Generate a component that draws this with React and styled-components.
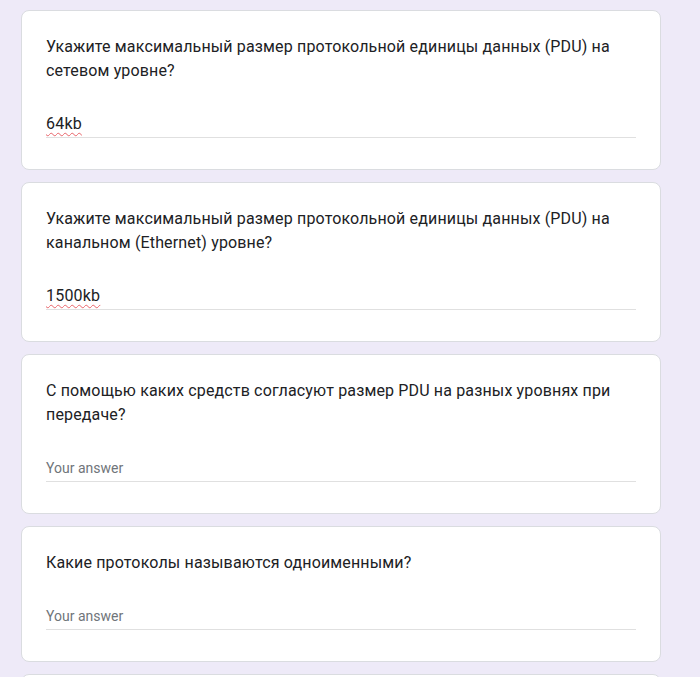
import React from 'react';
import styled, { createGlobalStyle } from 'styled-components';

const GlobalStyle = createGlobalStyle`
    html, body {
        margin: 0;
        padding: 0;
        background: #eeeaf8;
    }
    body {
        font-family: Roboto, "Liberation Sans", Arial, sans-serif;
    }
`;

const Page = styled.div`
    display: flex;
    flex-direction: column;
    gap: 12px;
    padding: 10px 0 0 21px;
    height: 677px;
    overflow: hidden;
    box-sizing: border-box;
`;

const Card = styled.div`
    width: 640px;
    box-sizing: border-box;
    flex-shrink: 0;
    background: #fff;
    border: 1px solid #dadce0;
    border-radius: 8px;
    padding: 24px;
`;

const Question = styled.div`
    font-size: 16px;
    line-height: 24px;
    color: #202124;
    letter-spacing: 0.15px;
`;

const Field = styled.div`
    margin-top: 24px;
    margin-bottom: 7px;
    padding: 5px 0 1px;
    height: 24px;
    border-bottom: 1px solid #e0e0e0;
    font-size: 16px;
    line-height: 24px;
`;

const Value = styled.span`
    color: #202124;
    letter-spacing: 0.2px;
    text-decoration: underline wavy #e8646a;
    text-decoration-thickness: 1px;
    text-underline-offset: 3px;
`;

const Placeholder = styled.span`
    font-size: 14px;
    color: #70757a;
`;

const items = [
    {
        q: 'Укажите максимальный размер протокольной единицы данных (PDU) на сетевом уровне?',
        a: '64kb',
    },
    {
        q: 'Укажите максимальный размер протокольной единицы данных (PDU) на канальном (Ethernet) уровне?',
        a: '1500kb',
    },
    {
        q: 'С помощью каких средств согласуют размер PDU на разных уровнях при передаче?',
        a: '',
    },
    {
        q: 'Какие протоколы называются одноименными?',
        a: '',
    },
    {
        q: 'Что такое инкапсуляция?',
        a: '',
    },
];

export default function App() {
    return (
        <>
            <GlobalStyle />
            <Page>
                {items.map((item, i) => (
                    <Card key={i}>
                        <Question>{item.q}</Question>
                        <Field>
                            {item.a ? <Value>{item.a}</Value> : <Placeholder>Your answer</Placeholder>}
                        </Field>
                    </Card>
                ))}
            </Page>
        </>
    );
}
